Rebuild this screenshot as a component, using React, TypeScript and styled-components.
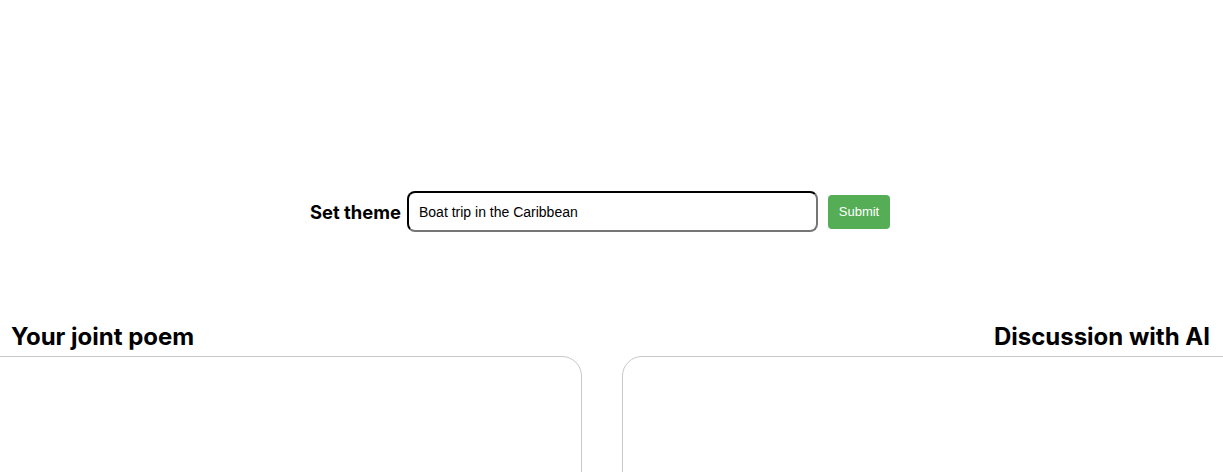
import React from "react";
import styled, { createGlobalStyle } from "styled-components";

const Global = createGlobalStyle`
  html, body { margin: 0; padding: 0; background: #fff; overflow: hidden; }
  body { font-family: Inter, "Liberation Sans", sans-serif; color: #000; }
`;

const Page = styled.div`
  display: flex;
  flex-direction: column;
  padding-top: 191px;
`;

const ThemeRow = styled.form`
  width: 1200px;
  display: flex;
  align-items: center;
  justify-content: center;
  margin: 0;
`;

const Label = styled.label`
  font-family: Inter, sans-serif;
  font-weight: 700;
  font-size: 18.4px;
  margin-right: 6px;
`;

const ThemeInput = styled.input`
  box-sizing: border-box;
  width: 411px;
  height: 41px;
  border: 2px inset rgb(118, 118, 118);
  border-top-color: #111;
  border-left-color: #222;
  border-radius: 8px;
  padding: 0 10px;
  font-family: "Liberation Sans", Arial, sans-serif;
  font-size: 14px;
  color: #000;
  outline: none;
`;

const SubmitButton = styled.button`
  box-sizing: border-box;
  margin-left: 10px;
  width: 62px;
  height: 34px;
  border: none;
  border-radius: 4px;
  background: #55ad56;
  color: #fff;
  font-family: "Liberation Sans", Arial, sans-serif;
  font-size: 13px;
  padding: 0;
`;

const Columns = styled.div`
  display: flex;
  gap: 40px;
  margin-top: 90px;
  margin-left: -1px;
  margin-right: -2px;
`;

const Column = styled.section<{ $width?: number }>`
  display: flex;
  flex-direction: column;
  ${(p) => (p.$width ? `width: ${p.$width}px; flex: none;` : `flex: 1;`)}
`;

const Heading = styled.h2<{ $align: "left" | "right" }>`
  margin: 0;
  font-family: Inter, sans-serif;
  font-weight: 700;
  font-size: 24px;
  line-height: 29px;
  text-align: ${(p) => p.$align};
  padding: 0 ${(p) => (p.$align === "right" ? "15px" : "0")} 5px
    ${(p) => (p.$align === "left" ? "12px" : "0")};
`;

const Panel = styled.div<{ $side: "left" | "right" }>`
  box-sizing: border-box;
  height: 200px;
  border: 1px solid #c8c8c8;
  border-radius: ${(p) => (p.$side === "left" ? "0 20px 0 0" : "20px 0 0 0")};
`;

export default function App() {
  return (
    <>
      <Global />
      <Page>
        <ThemeRow onSubmit={(e) => e.preventDefault()}>
          <Label htmlFor="theme">Set theme</Label>
          <ThemeInput id="theme" defaultValue="Boat trip in the Caribbean" />
          <SubmitButton type="submit">Submit</SubmitButton>
        </ThemeRow>
        <Columns>
          <Column $width={583}>
            <Heading $align="left">Your joint poem</Heading>
            <Panel $side="left" />
          </Column>
          <Column>
            <Heading $align="right">Discussion with AI</Heading>
            <Panel $side="right" />
          </Column>
        </Columns>
      </Page>
    </>
  );
}
